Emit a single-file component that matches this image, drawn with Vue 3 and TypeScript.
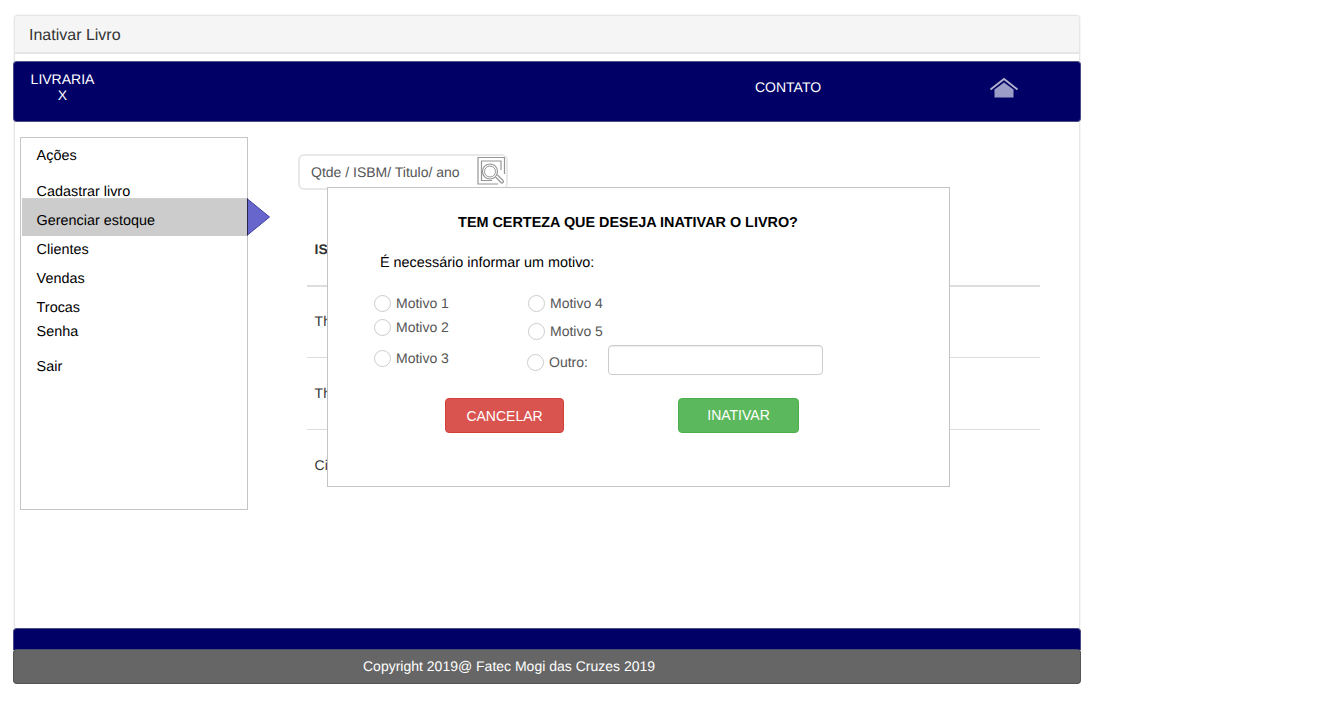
<template>
  <div class="page">
    <div class="panel">
      <div class="panel-heading">Inativar Livro</div>
      <div class="navbar">
        <div class="brand">LIVRARIA<br />X</div>
        <div class="contact">CONTATO</div>
        <svg class="home" width="30" height="22" viewBox="0 0 30 22">
          <path d="M5.500 20.500V12.500L15 5.500L24.500 12.500V20.500Z" fill="#9c9cc8" />
          <path d="M1.500 12.500L15 2L28.500 12.500" fill="none" stroke="#b4b4cc" stroke-width="1.800" />
        </svg>
      </div>
      <div class="content">
        <aside class="sidebar">
          <div
            v-for="item in menu"
            :key="item.label"
            :class="['menu-item', item.cls]"
          >{{ item.label }}</div>
          <svg class="arrow" width="24" height="38" viewBox="0 0 24 38">
            <path d="M0.500 1L22.500 19L0.500 37Z" fill="#6666cc" stroke="#4040a0" stroke-width="1" />
            <path d="M0.500 0.500V37.500" stroke="#26264a" stroke-width="1" />
          </svg>
        </aside>
        <main class="main">
          <div class="search">
            <span>Qtde / ISBM/ Titulo/ ano</span>
            <svg class="search-icon" width="30" height="30" viewBox="0 0 30 30" fill="none" stroke="#969696">
              <path d="M27.500 18V1.500H1V28H21" stroke-width="1.200" />
              <path d="M24 14V5H4.500V24.500H15" stroke-width="1.200" />
              <circle cx="13" cy="15.500" r="7.500" stroke-width="1.200" />
              <circle cx="13" cy="15.500" r="5.500" stroke-width="1" />
              <path d="M18.500 21L24 26.500Q25 27.500 26 26.500Q27 25.500 26 24.500L20.500 19" stroke-width="1.200" fill="#fff" />
            </svg>
          </div>
          <div class="table">
            <div class="head-cell">IS</div>
            <div v-for="(r, i) in rows" :key="i" class="row">{{ r }}</div>
          </div>
        </main>
        <section class="modal">
          <h3 class="modal-title">TEM CERTEZA QUE DESEJA INATIVAR O LIVRO?</h3>
          <p class="modal-text">É necessário informar um motivo:</p>
          <div class="reasons">
            <div class="col">
              <label v-for="m in leftReasons" :key="m.label" :class="['radio', m.cls]">
                <i class="dot"></i>{{ m.label }}
              </label>
            </div>
            <div class="col right">
              <label v-for="m in rightReasons" :key="m.label" :class="['radio', m.cls]">
                <i class="dot"></i>{{ m.label }}
              </label>
              <div class="other">
                <label class="radio"><i class="dot"></i>Outro:</label>
                <div class="input"></div>
              </div>
            </div>
          </div>
          <div class="actions">
            <button class="btn cancel">CANCELAR</button>
            <button class="btn confirm">INATIVAR</button>
          </div>
        </section>
      </div>
    </div>
    <div class="footer-bar"></div>
    <div class="footer">Copyright 2019@ Fatec Mogi das Cruzes 2019</div>
  </div>
</template>

<script setup lang="ts">
const menu = [
  { label: 'Ações', cls: 'acoes' },
  { label: 'Cadastrar livro', cls: 'cadastrar' },
  { label: 'Gerenciar estoque', cls: 'active' },
  { label: 'Clientes', cls: 'clientes' },
  { label: 'Vendas', cls: 'tight' },
  { label: 'Trocas', cls: 'tight' },
  { label: 'Senha', cls: 'senha' },
  { label: 'Sair', cls: 'sair' },
]
const rows = ['Th', 'Th', 'Ci']
const leftReasons = [
  { label: 'Motivo 1', cls: '' },
  { label: 'Motivo 2', cls: 'gap-4' },
  { label: 'Motivo 3', cls: 'gap-11' },
]
const rightReasons = [
  { label: 'Motivo 4', cls: '' },
  { label: 'Motivo 5', cls: 'gap-8' },
]
</script>

<style>
html,
body {
  margin: 0;
  background: #fff;
}
</style>

<style scoped>
.page {
  width: 1068px;
  padding: 15px 0 0 13px;
  font-family: 'Liberation Sans', Arial, sans-serif;
  font-size: 14px;
  line-height: 20px;
  color: #333;
  text-rendering: geometricPrecision;
}
.panel {
  height: 613px;
  margin: 0 1px;
  box-sizing: border-box;
  border: 1px solid #e6e6e6;
  border-bottom: 0;
  border-radius: 4px 4px 0 0;
  background: #fff;
  box-shadow: 0 0 0 1px #f6f6f6;
}
.panel-heading {
  height: 38px;
  box-sizing: border-box;
  padding: 10px 14px 0;
  background: #f5f5f5;
  border-bottom: 2px solid #e6e6e6;
  font-size: 16px;
  border-radius: 3px 3px 0 0;
}
.navbar {
  position: relative;
  display: flex;
  height: 61px;
  box-sizing: border-box;
  margin: 7px -2px 0;
  background: #000066;
  border: 1px solid #4a4a84;
  border-top-color: #55558c;
  border-radius: 4px;
  color: #fff;
}
.brand {
  width: 97px;
  padding-top: 9px;
  line-height: 16px;
  text-align: center;
}
.contact {
  margin: 16px 0 0 644px;
  line-height: 18px;
}
.home {
  margin: 15px 0 0 168px;
}
.content {
  position: relative;
  display: flex;
  padding: 15px 0 0 5px;
}
.sidebar {
  position: relative;
  width: 228px;
  height: 373px;
  box-sizing: border-box;
  border: 1px solid #c4c4c4;
  padding-top: 8px;
  color: #000;
  font-size: 14.4px;
}
.menu-item {
  padding-left: 15.600px;
}
.cadastrar {
  margin-top: 16px;
}
.active {
  position: relative;
  height: 38px;
  box-sizing: border-box;
  margin: -4px 0 0 1px;
  padding: 12px 0 0 14.600px;
  background: #cccccc;
  border-top: 1px solid #d0d0d0;
}
.clientes {
  margin-top: 4px;
}
.tight {
  margin-top: 9px;
}
.senha {
  margin-top: 4px;
}
.sair {
  margin-top: 15px;
}
.arrow {
  position: absolute;
  left: 226px;
  top: 60px;
}
.main {
  flex: 1;
  padding: 17px 0 0 50px;
}
.search {
  position: relative;
  width: 210px;
  height: 36px;
  box-sizing: border-box;
  border: 2px solid #e8e8e8;
  border-radius: 6px;
  padding: 6px 0 0 11px;
  color: #555;
}
.search-icon {
  position: absolute;
  left: 177px;
  top: 0;
}
.table {
  width: 733px;
  margin: 0 0 0 9px;
  color: #333;
}
.head-cell {
  height: 97px;
  box-sizing: border-box;
  margin-bottom: -1px;
  padding: 49px 7.600px 0;
  border-bottom: 2px solid #ddd;
  font-weight: bold;
}
.row {
  height: 72px;
  box-sizing: border-box;
  padding: 25px 7.600px 0;
  border-bottom: 1px solid #ddd;
}
.row:last-child {
  border-bottom: 0;
}
.modal {
  position: absolute;
  left: 312px;
  top: 65px;
  width: 623px;
  height: 300px;
  box-sizing: border-box;
  border: 1px solid #c4c4c4;
  background: #fff;
  color: #000;
}
.modal-title {
  margin: 25px 21px 0 0;
  font-size: 14.400px;
  line-height: 20px;
  font-weight: bold;
  text-align: center;
}
.modal-text {
  margin: 20px 0 0 52px;
  font-size: 14.400px;
}
.reasons {
  display: flex;
  margin: 20px 0 0 46px;
  color: #555;
}
.col {
  width: 154px;
  flex: none;
}
.right {
  width: 300px;
}
.radio {
  display: flex;
  align-items: center;
  height: 20px;
}
.dot {
  width: 17px;
  height: 17px;
  box-sizing: border-box;
  margin-right: 5px;
  border: 1px solid #ccc;
  border-radius: 50%;
  background: #fff;
}
.gap-4 {
  margin-top: 4px;
}
.gap-8 {
  margin-top: 8px;
}
.gap-11 {
  margin-top: 11px;
}
.other {
  display: flex;
  align-items: flex-start;
  margin: 11px 0 0 -1px;
}
.input {
  width: 215px;
  height: 30px;
  box-sizing: border-box;
  margin: -7px 0 0 20px;
  border: 1px solid #ccc;
  border-radius: 4px;
  box-shadow: inset 0 1px 1px rgba(0, 0, 0, 0.075);
}
.actions {
  display: flex;
  margin: 23px 0 0 117px;
}
.btn {
  height: 35px;
  box-sizing: border-box;
  padding: 0;
  border: 1px solid;
  border-radius: 4px;
  color: #fff;
  font: inherit;
}
.cancel {
  width: 119px;
  background: #d9534f;
  border-color: #d43f3a;
  padding-top: 1px;
}
.confirm {
  width: 121px;
  margin-left: 114px;
  background: #5cb85c;
  border-color: #4cae4c;
  padding-bottom: 1px;
}
.footer-bar {
  height: 22px;
  background: #000066;
  border: 1px solid #4a4a84;
  border-bottom: 0;
  box-sizing: border-box;
  border-radius: 4px 4px 0 0;
}
.footer {
  height: 35px;
  box-sizing: border-box;
  margin-top: -1px;
  padding: 6px 0 0 349px;
  background: #666666;
  border: 1px solid #555;
  border-top-color: #4d4d70;
  border-radius: 4px;
  color: #fff;
}
</style>
